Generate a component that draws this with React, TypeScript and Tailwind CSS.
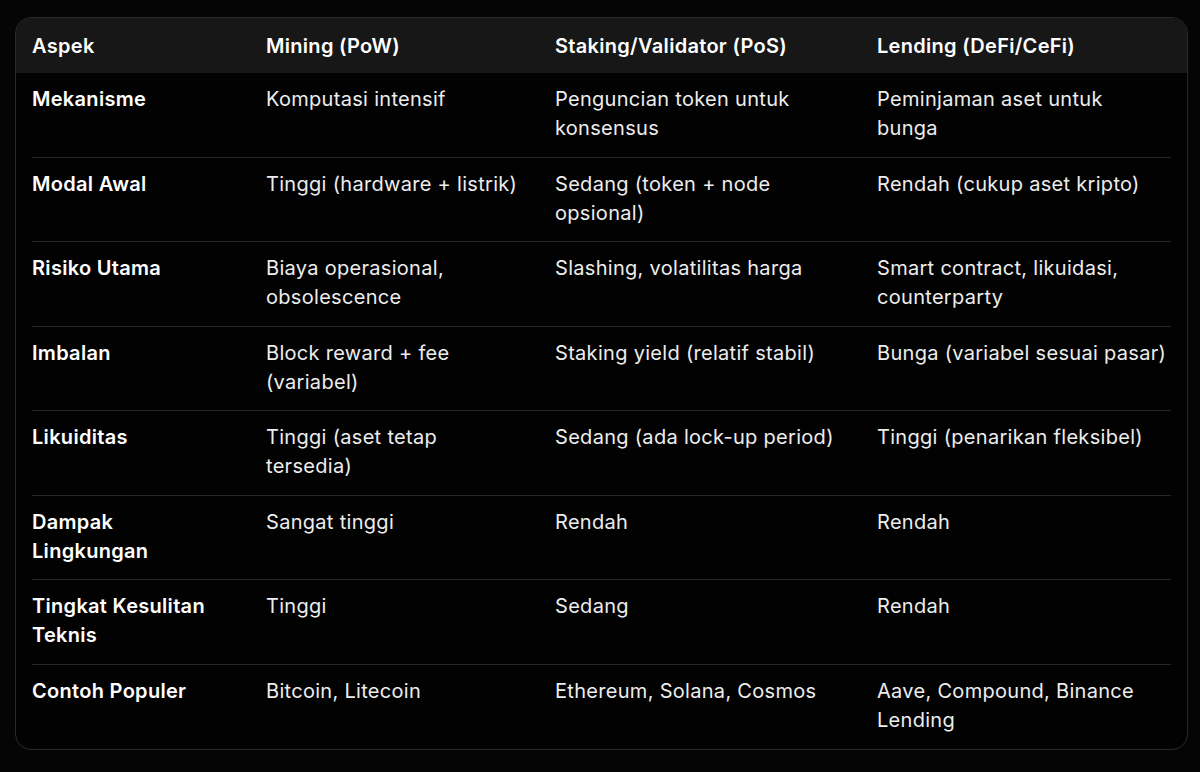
const headers = ["Aspek", "Mining (PoW)", "Staking/Validator (PoS)", "Lending (DeFi/CeFi)"];

const rows: string[][] = [
  ["Mekanisme", "Komputasi intensif", "Penguncian token untuk konsensus", "Peminjaman aset untuk bunga"],
  ["Modal Awal", "Tinggi (hardware + listrik)", "Sedang (token + node opsional)", "Rendah (cukup aset kripto)"],
  ["Risiko Utama", "Biaya operasional, obsolescence", "Slashing, volatilitas harga", "Smart contract, likuidasi, counterparty"],
  ["Imbalan", "Block reward + fee (variabel)", "Staking yield (relatif stabil)", "Bunga (variabel sesuai pasar)"],
  ["Likuiditas", "Tinggi (aset tetap tersedia)", "Sedang (ada lock-up period)", "Tinggi (penarikan fleksibel)"],
  ["Dampak Lingkungan", "Sangat tinggi", "Rendah", "Rendah"],
  ["Tingkat Kesulitan Teknis", "Tinggi", "Sedang", "Rendah"],
  ["Contoh Populer", "Bitcoin, Litecoin", "Ethereum, Solana, Cosmos", "Aave, Compound, Binance Lending"],
];

const cols = "grid grid-cols-[234px_289px_322px_1fr]";

export default function App() {
  return (
    <div
      className="min-h-screen w-full bg-[#050505] pt-[17px] pl-[15px] pr-[12px] text-[20px] tracking-[0.3px] text-[#ededed]"
      style={{ fontFamily: "Inter, 'Noto Sans', sans-serif" }}
    >
      <div className="overflow-hidden rounded-[16px] border border-[#2a2a2a] bg-[#020202]">
        {/* Header */}
        <div className={`${cols} h-[55px] items-center bg-[#171717] px-4 font-semibold leading-[28px] text-white`}>
          {headers.map((h) => (
            <div key={h}>{h}</div>
          ))}
        </div>

        {/* Body */}
        <div className="px-4">
          {rows.map((r, i) => (
            <div
              key={r[0]}
              className={`${cols} h-[84.5px] pt-[12px] leading-[29px] ${i < rows.length - 1 ? "border-b border-[#262626]" : ""}`}
            >
              <div className="pr-8 font-semibold text-white">{r[0]}</div>
              <div className="pr-8">{r[1]}</div>
              <div className="pr-8">{r[2]}</div>
              <div className="pr-[4.5px]">{r[3]}</div>
            </div>
          ))}
        </div>
      </div>
    </div>
  );
}
